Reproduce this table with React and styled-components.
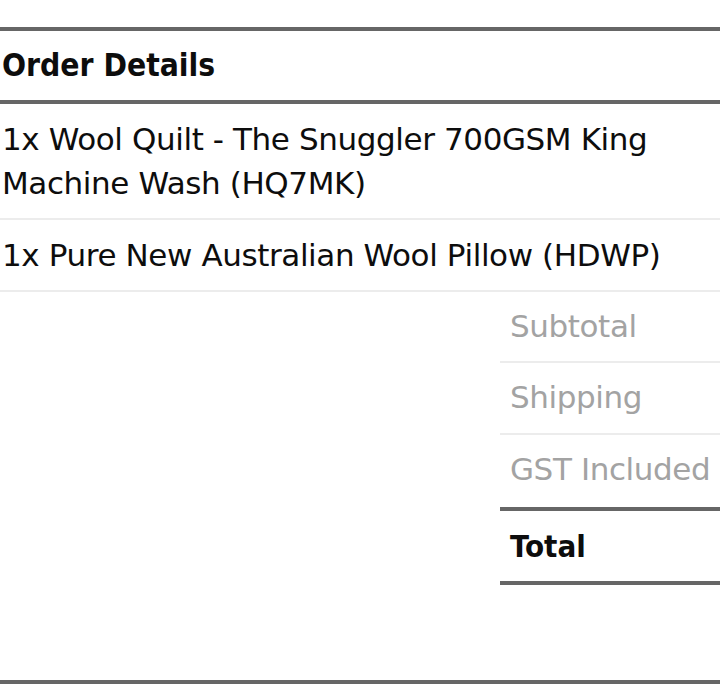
import React from 'react';
import styled, { createGlobalStyle } from 'styled-components';

const GlobalStyle = createGlobalStyle`
  html, body {
    margin: 0;
    padding: 0;
    background: #fff;
    overflow: hidden;
  }
  body {
    font-family: "DejaVu Sans", Verdana, sans-serif;
    color: #0d0d0d;
  }
`;

const Page = styled.div`
  width: 720px;
  padding-top: 27px;
`;

const OrderTable = styled.section`
  border-top: 4px solid #666;
  border-bottom: 4px solid #666;
`;

const Heading = styled.h2`
  margin: 0;
  padding: 12px 2px 13px;
  font-family: "DejaVu Sans Condensed", "DejaVu Sans", sans-serif;
  font-weight: 700;
  font-size: 31.5px;
  line-height: 44px;
  color: #0d0d0d;
  border-bottom: 4px solid #666;
`;

const ItemRow = styled.div`
  padding: 13px 2px;
  font-size: 31px;
  line-height: 44px;
  letter-spacing: -0.4px;
  border-bottom: 2px solid #ececec;
`;

const Totals = styled.div`
  margin-left: 500px;
  padding-bottom: 95px;
`;

const TotalRow = styled.div`
  padding: ${(p) => (p.strong ? '13px' : '12px')} 0 ${(p) => p.bottom}px 10px;
  font-family: ${(p) => (p.strong ? '"DejaVu Sans Condensed", "DejaVu Sans", sans-serif' : 'inherit')};
  font-size: 31px;
  font-weight: ${(p) => (p.strong ? 700 : 400)};
  line-height: 44px;
  letter-spacing: ${(p) => (p.strong ? '0' : '-0.4px')};
  white-space: nowrap;
  color: ${(p) => (p.strong ? '#0d0d0d' : '#a3a3a3')};
  border-bottom: ${(p) => p.border};
`;

const items = [
  '1x Wool Quilt - The Snuggler 700GSM King Machine Wash (HQ7MK)',
  '1x Pure New Australian Wool Pillow (HDWP)',
];

const thin = '2px solid #ececec';
const thick = '4px solid #666';

const totals = [
  { label: 'Subtotal', border: thin, bottom: 13 },
  { label: 'Shipping', border: thin, bottom: 14 },
  { label: 'GST Included', border: thick, bottom: 16 },
  { label: 'Total', border: thick, bottom: 13, strong: true },
];

export default function App() {
  return (
    <Page>
      <GlobalStyle />
      <OrderTable>
        <Heading>Order Details</Heading>
        {items.map((item) => (
          <ItemRow key={item}>{item}</ItemRow>
        ))}
        <Totals>
          {totals.map((t) => (
            <TotalRow key={t.label} border={t.border} bottom={t.bottom} strong={t.strong}>
              {t.label}
            </TotalRow>
          ))}
        </Totals>
      </OrderTable>
    </Page>
  );
}
